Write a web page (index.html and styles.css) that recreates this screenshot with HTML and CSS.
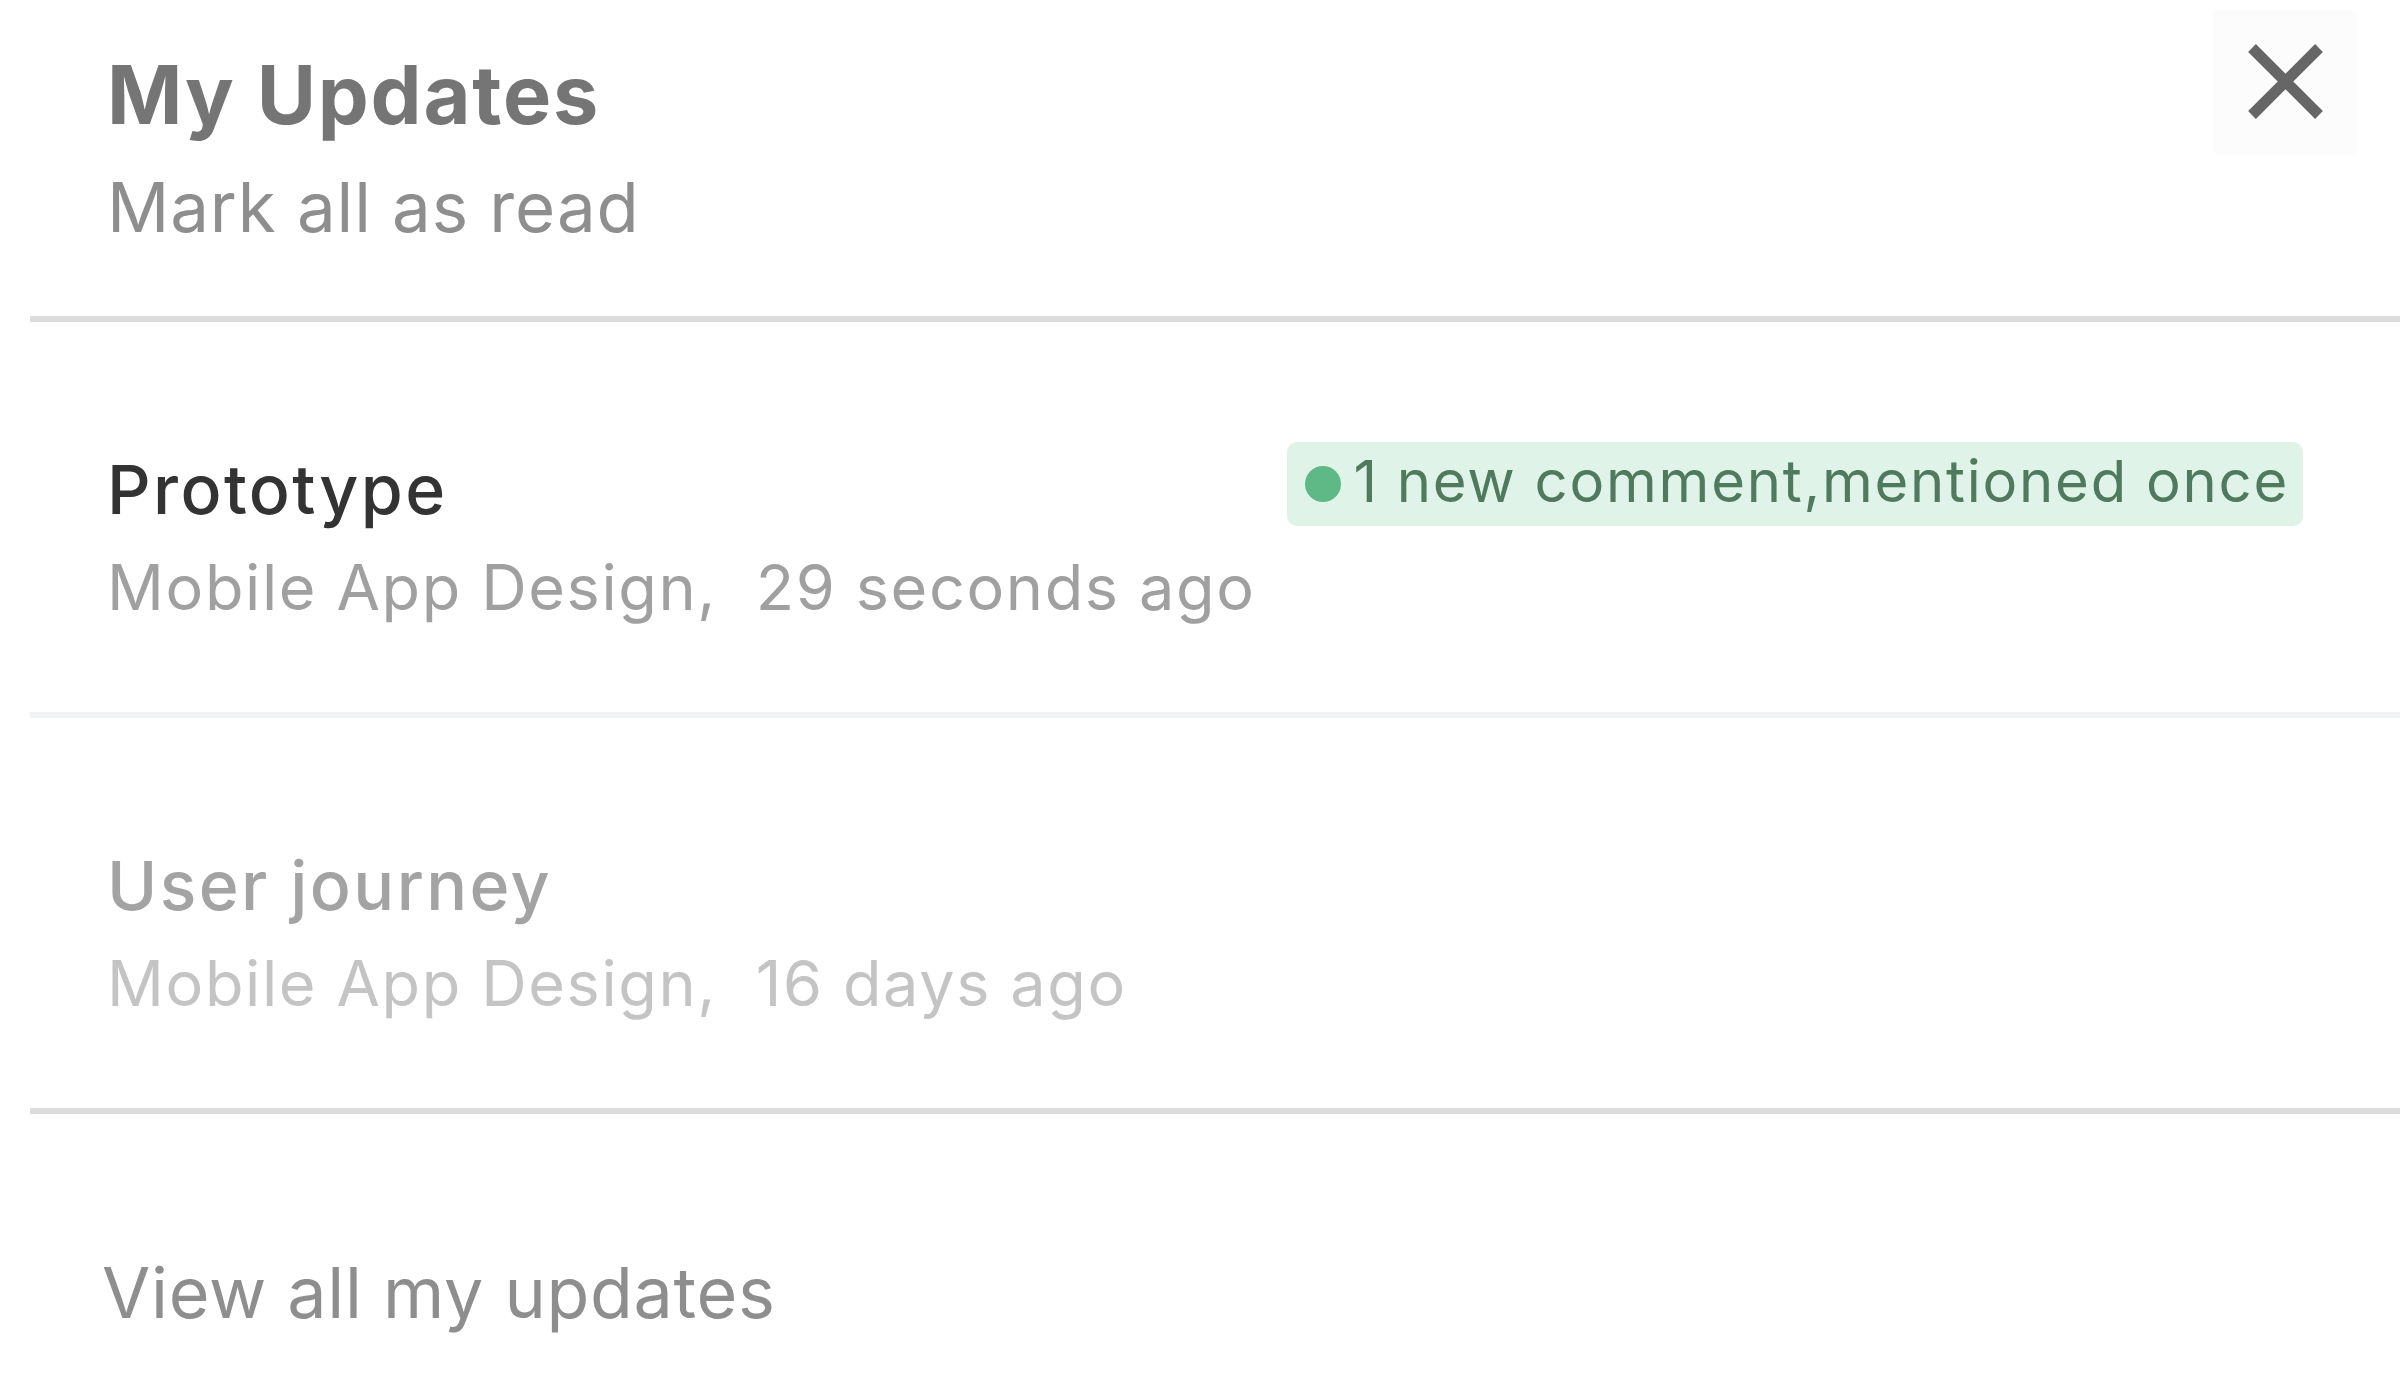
FILE: index.html
```html
<!DOCTYPE html>
<html lang="en">
<head>
    <meta charset="UTF-8">
    <meta name="viewport" content="width=device-width, initial-scale=1.0">
    <title>My Updates</title>
    <link rel="stylesheet" href="styles.css">
</head>
<body>
    <div class="panel">
        <div class="header">
            <div class="header-text">
                <h1 class="title">My Updates</h1>
                <div class="mark-read">Mark all as read</div>
            </div>
            <button class="close-btn" type="button" aria-label="Close">
                <svg width="144" height="144" viewBox="0 0 144 144">
                    <path d="M39 38 L106 105 M106 38 L39 105" stroke="#666" stroke-width="11" fill="none"/>
                </svg>
            </button>
        </div>

        <div class="update-row">
            <div class="update-info">
                <div class="update-name">Prototype</div>
                <div class="update-meta">Mobile App Design,&nbsp; 29 seconds ago</div>
            </div>
            <div class="badge">
                <span class="badge-dot"></span>
                <span class="badge-text">1 new comment,mentioned once</span>
            </div>
        </div>

        <div class="update-row read">
            <div class="update-info">
                <div class="update-name">User journey</div>
                <div class="update-meta">Mobile App Design,&nbsp; 16 days ago</div>
            </div>
        </div>

        <div class="footer">
            <a class="view-all" href="#">View all my updates</a>
        </div>
    </div>
</body>
</html>
```

FILE: styles.css
```css
body { margin: 0; background: #fff; font-family: Inter, "Noto Sans", sans-serif; }
.panel { margin-left: 30px; }

.header { display: flex; justify-content: space-between; align-items: flex-start; padding: 10px 43px 64px 77px; border-bottom: 6px solid #dcdcdc; }
.header-text { padding-top: 35px; }
.title { margin: 0; font-size: 81px; line-height: 100px; font-weight: 700; color: #757575; letter-spacing: 1.8px; }
.mark-read { margin-top: 17px; font-size: 69px; line-height: 90px; color: #8e8e8e; letter-spacing: 0.9px; }
.close-btn { width: 144px; height: 144px; padding: 0; border: none; background: #fcfcfc; border-radius: 4px; cursor: pointer; }
.close-btn svg { display: block; }

.update-row { display: flex; justify-content: space-between; align-items: flex-start; padding: 120px 97px 85px 77px; border-bottom: 6px solid #f2f3f5; }
.update-row.read { border-bottom-color: #dcdcdc; }
.update-info { padding-top: 7px; }
.update-name { font-size: 68px; line-height: 80px; font-weight: 500; color: #333; letter-spacing: 2.4px; }
.update-meta { margin-top: 18px; font-size: 63px; line-height: 80px; color: #a0a0a0; letter-spacing: 1.6px; }
.read .update-name { color: #a3a3a3; }
.read .update-meta { color: #c4c4c4; }

.badge { display: flex; align-items: center; gap: 12px; height: 84px; padding: 0 14px 0 18px; background: #e0f3e8; border-radius: 10px; }
.badge-dot { width: 36px; height: 36px; border-radius: 50%; background: #5fb987; }
.badge-text { font-size: 58px; line-height: 78px; padding-bottom: 6px; color: #4f7a5d; letter-spacing: 1.75px; }

.footer { padding: 134px 0 60px 72px; }
.view-all { font-size: 70px; line-height: 90px; color: #8e8e8e; text-decoration: none; letter-spacing: 0.7px; }
```
